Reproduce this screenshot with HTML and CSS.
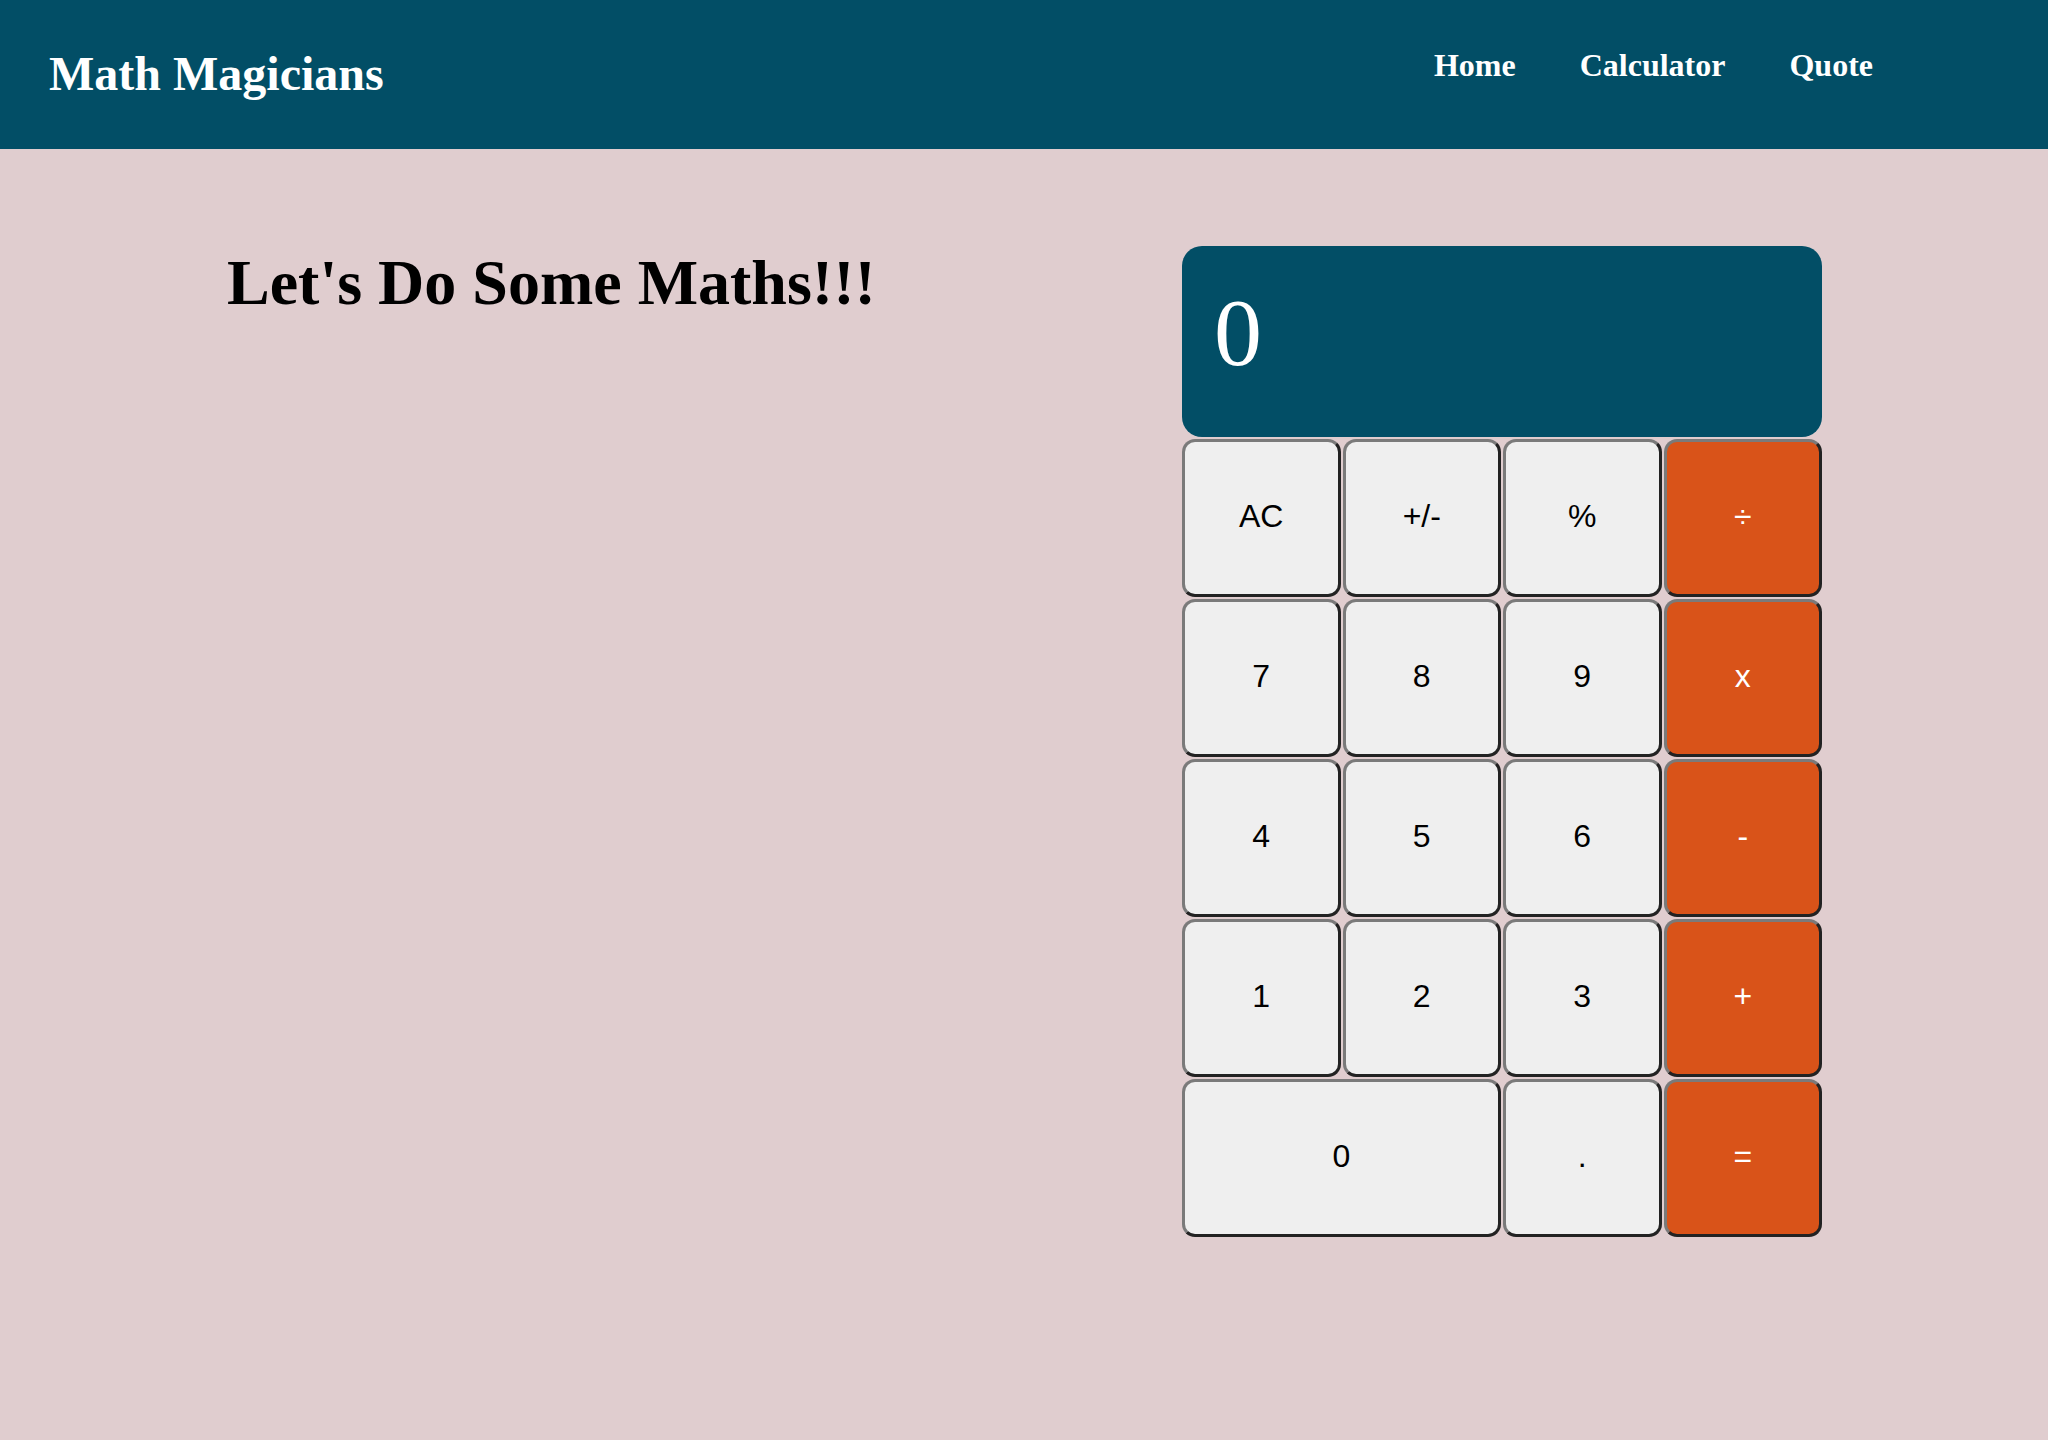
FILE: index.html
```html
<!DOCTYPE html>
<html lang="en">
<head>
<meta charset="utf-8">
<title>Math Magicians</title>
<link rel="stylesheet" href="styles.css">
</head>
<body>
<header class="topbar">
  <h1 class="brand">Math Magicians</h1>
  <nav class="nav">
    <ul class="nav-list">
      <li><a class="nav-link" href="#">Home</a></li>
      <li><a class="nav-link" href="#">Calculator</a></li>
      <li><a class="nav-link" href="#">Quote</a></li>
    </ul>
  </nav>
</header>
<main class="page">
  <section class="intro">
    <h2 class="intro-title">Let's Do Some Maths!!!</h2>
  </section>
  <section class="calculator">
    <div class="display">0</div>
    <div class="keys">
      <button class="key">AC</button>
      <button class="key">+/-</button>
      <button class="key">%</button>
      <button class="key key-op">÷</button>
      <button class="key">7</button>
      <button class="key">8</button>
      <button class="key">9</button>
      <button class="key key-op">x</button>
      <button class="key">4</button>
      <button class="key">5</button>
      <button class="key">6</button>
      <button class="key key-op">-</button>
      <button class="key">1</button>
      <button class="key">2</button>
      <button class="key">3</button>
      <button class="key key-op">+</button>
      <button class="key key-wide">0</button>
      <button class="key">.</button>
      <button class="key key-op">=</button>
    </div>
  </section>
</main>
</body>
</html>
```

FILE: styles.css
```css
* {
  box-sizing: border-box;
}

html,
body {
  margin: 0;
  padding: 0;
}

body {
  background: #e0cdcf;
  font-family: "Liberation Serif", "Times New Roman", serif;
  color: #000;
  min-height: 1440px;
}

.topbar {
  height: 149px;
  background: #024e66;
  display: flex;
  justify-content: space-between;
  align-items: flex-start;
  padding: 46px 175px 0 49px;
}

.brand {
  margin: 0;
  font-size: 48px;
  font-weight: bold;
  line-height: normal;
  color: #fff;
}

.nav {
  padding-top: 1px;
}

.nav-list {
  list-style: none;
  margin: 0;
  padding: 0;
  display: flex;
  gap: 64px;
}

.nav-link {
  font-size: 32px;
  font-weight: bold;
  line-height: normal;
  color: #fff;
  text-decoration: none;
}

.page {
  display: flex;
  align-items: flex-start;
  padding: 97px 0 0 227px;
}

.intro {
  width: 955px;
  flex: none;
}

.intro-title {
  margin: 0;
  font-size: 64px;
  font-weight: bold;
  line-height: normal;
}

.calculator {
  width: 640px;
  flex: none;
}

.display {
  height: 191px;
  margin-bottom: 2px;
  background: #024e66;
  color: #fff;
  border-radius: 20px;
  padding: 31px 32px;
  font-size: 96px;
  line-height: normal;
}

.keys {
  display: grid;
  grid-template-columns: repeat(4, 1fr);
  grid-auto-rows: 158px;
  gap: 2px;
}

.key {
  font-family: "Liberation Sans", Arial, sans-serif;
  font-size: 32px;
  color: #000;
  background: #efefef;
  border: 3px solid;
  border-color: #7a7a7a #222 #222 #7a7a7a;
  border-radius: 13px;
  padding: 0 0 4px;
  margin: 0;
}

.key-op {
  background: #d95319;
  color: #fff;
}

.key-wide {
  grid-column: span 2;
}
```
